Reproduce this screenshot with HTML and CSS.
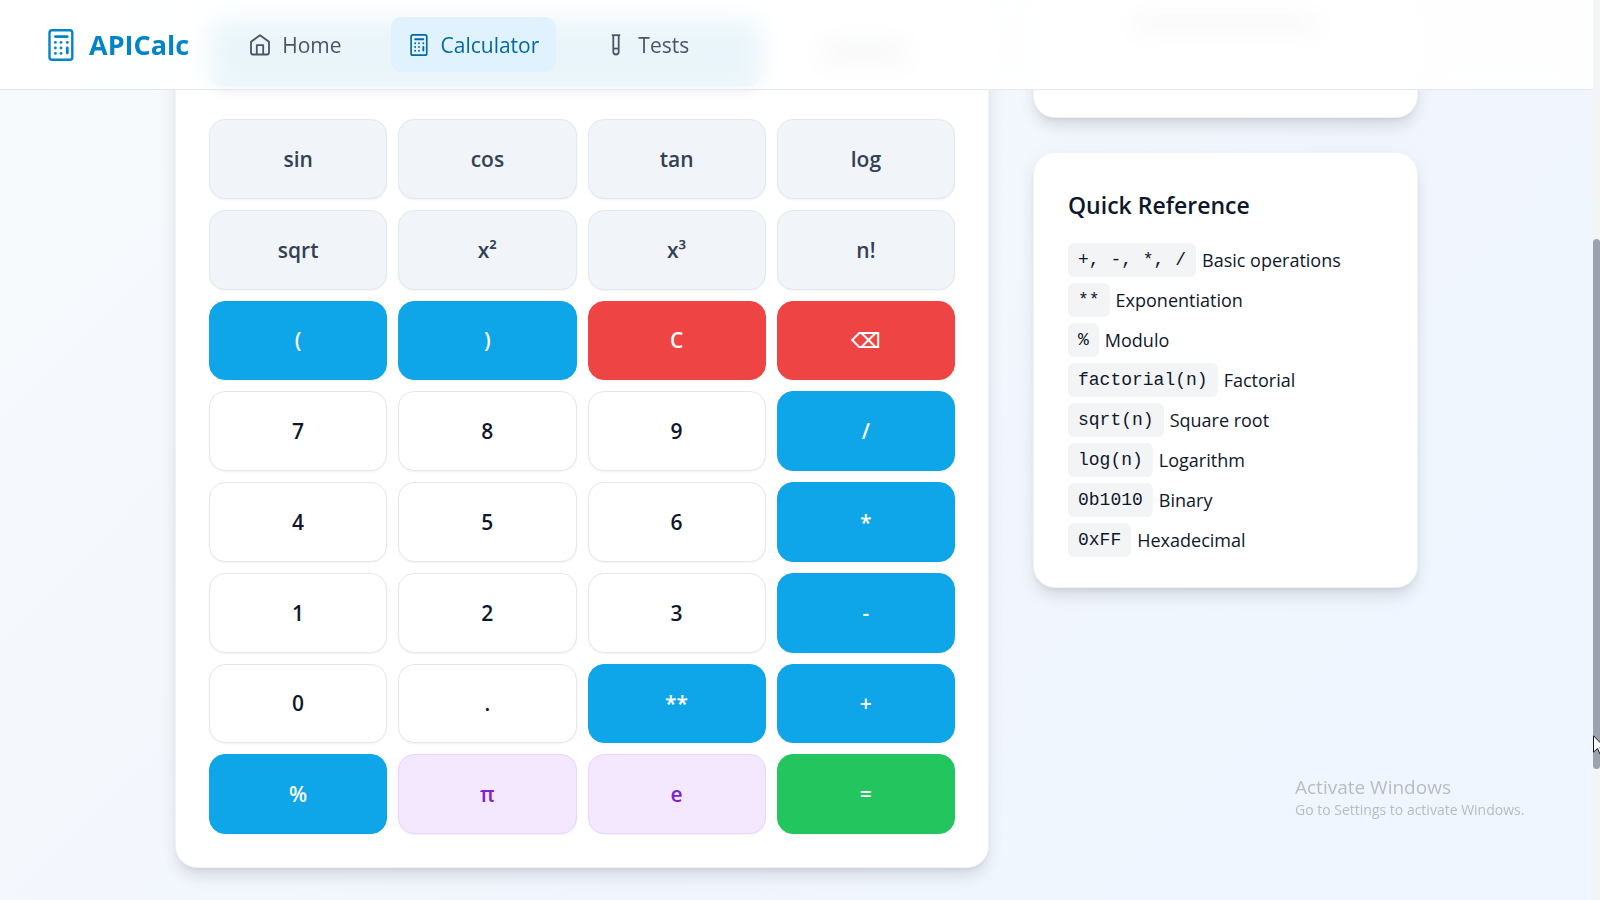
FILE: index.html
```html
<!DOCTYPE html>
<html lang="en">
<head>
<meta charset="utf-8">
<meta name="viewport" content="width=device-width, initial-scale=1">
<title>APICalc</title>
<link rel="stylesheet" href="styles.css">
</head>
<body>
<svg class="defs" width="0" height="0" aria-hidden="true">
  <symbol id="calc" viewBox="0 0 26 32">
    <g fill="none" stroke="currentColor" stroke-width="2.4" stroke-linecap="round">
      <rect x="1.5" y="1.2" width="22.8" height="29.6" rx="2.6"/>
      <path d="M7.4 7.6h11.8" stroke-width="2.8"/>
      <path d="M19.3 19v5" stroke-width="2.8"/>
    </g>
    <g fill="currentColor">
      <circle cx="7.4" cy="13.4" r="1.4"/><circle cx="13" cy="13.4" r="1.4"/><circle cx="19.3" cy="13.4" r="1.4"/>
      <circle cx="7.4" cy="19" r="1.4"/><circle cx="13" cy="19" r="1.4"/>
      <circle cx="7.4" cy="24.4" r="1.4"/><circle cx="13" cy="24.4" r="1.4"/>
    </g>
  </symbol>
</svg>

<header class="nav">
  <a class="brand" href="#"><svg class="brand-icon" aria-hidden="true"><use href="#calc"/></svg>APICalc</a>
  <nav class="links">
    <a class="link" href="#"><svg class="icon" viewBox="0 0 22 22" fill="none" stroke="currentColor" stroke-width="1.8" stroke-linejoin="round" aria-hidden="true"><path d="M2 7.8 11 1.2l9 6.6v10.8a1.9 1.9 0 0 1-1.9 1.9H3.9A1.9 1.9 0 0 1 2 18.6z"/><path d="M7.8 20.3V11.2h6.4v9.1"/></svg>Home</a>
    <a class="link active" href="#" aria-current="page"><svg class="icon" aria-hidden="true"><use href="#calc"/></svg>Calculator</a>
    <a class="link" href="#"><svg class="icon" viewBox="0 0 22 22" fill="none" stroke="currentColor" stroke-width="1.8" aria-hidden="true"><path d="M6.8 1.2h8.4"/><path d="M8.3 1.4v16.4a2.7 2.7 0 0 0 5.4 0V1.4"/><path d="M8.3 14.6h5.4"/></svg>Tests</a>
  </nav>
</header>

<main class="page">
  <section class="card calculator">
    <div class="actions" aria-hidden="true"><div class="primary"></div><div class="secondary"><div class="smudge"></div></div></div>
    <div class="keys">
      <button class="key fn">sin</button><button class="key fn">cos</button><button class="key fn">tan</button><button class="key fn">log</button>
      <button class="key fn">sqrt</button><button class="key fn">x²</button><button class="key fn">x³</button><button class="key fn">n!</button>
      <button class="key op">(</button><button class="key op">)</button><button class="key danger">C</button><button class="key danger" aria-label="Backspace">⌫</button>
      <button class="key">7</button><button class="key">8</button><button class="key">9</button><button class="key op">/</button>
      <button class="key">4</button><button class="key">5</button><button class="key">6</button><button class="key op">*</button>
      <button class="key">1</button><button class="key">2</button><button class="key">3</button><button class="key op">-</button>
      <button class="key">0</button><button class="key">.</button><button class="key op">**</button><button class="key op">+</button>
      <button class="key op">%</button><button class="key const">π</button><button class="key const">e</button><button class="key equals">=</button>
    </div>
  </section>
  <aside class="side">
    <section class="card history" aria-hidden="true"><div class="smudge wide"></div></section>
    <section class="card reference">
      <h2>Quick Reference</h2>
      <ul>
        <li><code>+, -, *, /</code> Basic operations</li>
        <li><code>**</code> Exponentiation</li>
        <li><code>%</code> Modulo</li>
        <li><code>factorial(n)</code> Factorial</li>
        <li><code>sqrt(n)</code> Square root</li>
        <li><code>log(n)</code> Logarithm</li>
        <li><code>0b1010</code> Binary</li>
        <li><code>0xFF</code> Hexadecimal</li>
      </ul>
    </section>
  </aside>
</main>

<div class="watermark"><p class="wm-title">Activate Windows</p><p class="wm-text">Go to Settings to activate Windows.</p></div>
<div class="track" aria-hidden="true"><div class="thumb"></div></div>
<svg class="pointer" viewBox="0 0 12 20" aria-hidden="true"><path d="M.5.8v16.4l4-3.8 2.6 5.8 2.4-1-2.6-5.6h5.2z" fill="#fff" stroke="#111827"/></svg>
</body>
</html>
```
FILE: styles.css
```css
* { box-sizing: border-box; margin: 0; padding: 0; }

body {
  height: 100vh;
  overflow: hidden;
  padding-right: 7px;
  font-family: "Open Sans", "Noto Sans", sans-serif;
  color: #0f172a;
  background: linear-gradient(135deg, #f7fafc, #f1f6fe 60%, #eff6ff);
}

.defs { position: absolute; }

.nav {
  position: fixed;
  z-index: 2;
  top: 0;
  left: 0;
  right: 7px;
  height: 90px;
  padding: 0 48px;
  display: flex;
  align-items: center;
  gap: 43px;
  background: rgba(255, 255, 255, 0.9);
  backdrop-filter: blur(13px);
  border-bottom: 1px solid #e5e7eb;
}

.brand {
  display: flex;
  align-items: center;
  gap: 15px;
  font-size: 27px;
  font-weight: 700;
  color: #0284c7;
  text-decoration: none;
}
.brand-icon { width: 26px; height: 32px; }

.links { display: flex; gap: 32px; }

.link {
  display: flex;
  align-items: center;
  gap: 11px;
  height: 55px;
  padding: 0 17px;
  border-radius: 11px;
  font-size: 21px;
  color: #4b5563;
  text-decoration: none;
}
.link.active { background: #e0f2fe; color: #0369a1; }
.icon { width: 22px; height: 22px; }

.page {
  max-width: 1243px;
  margin: 0 auto;
  display: grid;
  grid-template-columns: 814fr 385fr;
  gap: 44px;
  align-items: start;
}

.card {
  background: #fff;
  border: 1px solid #f0f2f4;
  border-radius: 22px;
  box-shadow: 0 11px 17px -3px rgba(0, 0, 0, 0.1), 0 4px 7px -4px rgba(0, 0, 0, 0.1), 0 2px 24px rgba(0, 0, 0, 0.03);
}

.calculator { margin-top: -41px; padding: 60px 33px 33px; }

.actions { display: flex; gap: 11px; height: 66px; margin-bottom: 33px; }
.primary { flex: 1; border-radius: 14px; background: #2697cb; box-shadow: 0 6px 14px -3px rgba(0, 0, 0, 0.1); }
.secondary {
  width: 182px;
  display: grid;
  place-items: center;
  border: 1px solid #e5e7eb;
  border-radius: 14px;
  background: #fff;
}
.smudge { width: 90px; height: 20px; background: #9ca3af; }

.keys {
  display: grid;
  grid-template-columns: repeat(4, 1fr);
  grid-auto-rows: 1fr;
  gap: 11px;
  min-height: 715px;
}

.key {
  border: 1px solid #e5e7eb;
  border-radius: 16px;
  background: #fff;
  color: #0f172a;
  font: 600 21px "Open Sans", "Noto Sans", "DejaVu Sans", sans-serif;
  box-shadow: 0 1px 2px rgba(0, 0, 0, 0.05);
}
.key.fn { background: #f1f5f9; border-color: #e2e8f0; color: #334155; }
.key.op { background: #0ea5e9; border-color: #0ea5e9; color: #fff; }
.key.danger { background: #ef4444; border-color: #ef4444; color: #fff; }
.key.const { background: #f3e8ff; border-color: #e9d5ff; color: #7e22ce; }
.key.equals { background: #22c55e; border-color: #22c55e; color: #fff; }

.side { display: grid; gap: 34px; }

.history { height: 158px; margin-top: -40px; display: grid; justify-items: center; padding-top: 54px; }
.smudge.wide { width: 190px; height: 20px; background: #b6bac2; }

.reference { padding: 35px 34px 27px; }
.reference h2 { margin-bottom: 18px; font-size: 23px; line-height: 34px; font-weight: 600; }
.reference ul { list-style: none; }
.reference li { display: flex; align-items: center; gap: 6px; height: 40px; font-size: 18px; }
.reference code {
  padding: 0 10px;
  border-radius: 6px;
  background: #f3f4f6;
  font: 18px/34px "Liberation Mono", monospace;
}

.watermark { position: fixed; right: 69px; bottom: 80px; width: 236px; color: #b9bdc2; }
.wm-title { font-size: 19px; line-height: 26px; }
.wm-text { font-size: 14px; line-height: 20px; }

.track { position: fixed; z-index: 3; top: 0; right: 0; bottom: 0; width: 7px; padding-top: 239px; background: #f3f4f6; }
.thumb { height: 530px; border-radius: 4px; background: #9ca3af; }
.pointer { position: fixed; z-index: 4; right: -5px; top: 735px; width: 12px; height: 20px; }
```
